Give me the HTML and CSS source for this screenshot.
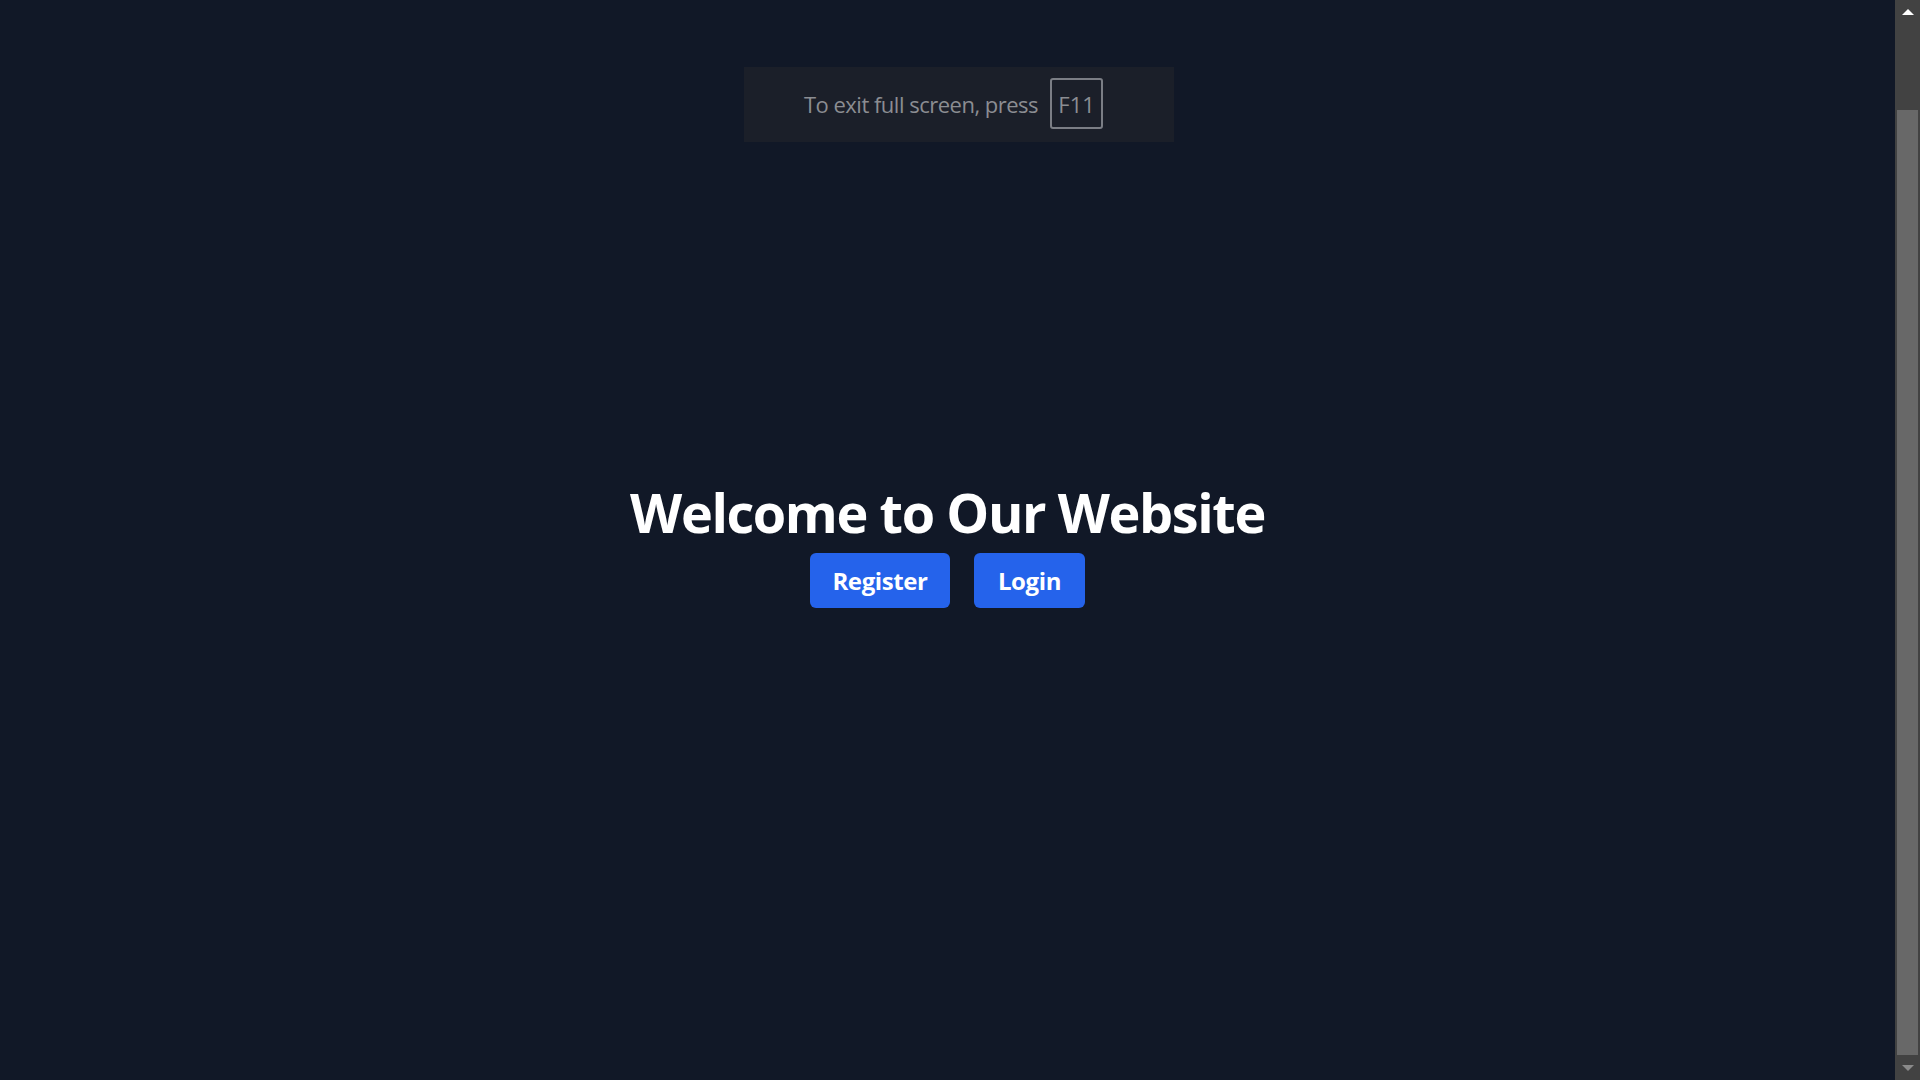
FILE: index.html
```html
<!DOCTYPE html>
<html lang="en">
<head>
<meta charset="utf-8">
<title>Welcome</title>
<link rel="stylesheet" href="styles.css">
</head>
<body>
<div class="screen">
  <main class="main">
    <section class="hero">
      <h1 class="title">Welcome to Our Website</h1>
      <div class="actions">
        <a class="btn btn-register" href="#">Register</a>
        <a class="btn btn-login" href="#">Login</a>
      </div>
    </section>
  </main>
  <div class="scrollbar">
    <div class="sb-arrow sb-up"></div>
    <div class="sb-track"><div class="sb-thumb"></div></div>
    <div class="sb-arrow sb-down"></div>
  </div>
  <div class="fs-toast">
    <span class="fs-text">To exit full screen, press</span>
    <span class="fs-key">F11</span>
  </div>
</div>
</body>
</html>
```

FILE: styles.css
```css
* { box-sizing: border-box; }
html, body { margin: 0; padding: 0; height: 100%; }
body {
  background: #111827;
  font-family: "Open Sans", "Noto Sans", sans-serif;
  overflow: hidden;
}
.screen {
  position: relative;
  display: flex;
  width: 1920px;
  height: 1080px;
}
.main {
  flex: 1;
  display: flex;
  align-items: center;
  justify-content: center;
  padding-top: 8px;
}
.hero {
  display: flex;
  flex-direction: column;
  align-items: center;
}
.title {
  margin: 0;
  color: #ffffff;
  font-weight: 700;
  font-size: 54px;
  line-height: 64px;
  letter-spacing: -1.4px;
}
.actions {
  display: flex;
  gap: 24px;
  margin-top: 9px;
}
.btn {
  display: flex;
  align-items: center;
  justify-content: center;
  height: 55px;
  background: #2563eb;
  color: #ffffff;
  border-radius: 6px;
  font-weight: 700;
  font-size: 24px;
  letter-spacing: -0.4px;
  text-decoration: none;
}
.btn-register { width: 140px; }
.btn-login { width: 111px; }
.scrollbar {
  width: 25px;
  background: #424242;
  display: flex;
  flex-direction: column;
  padding-left: 2px;
  padding-right: 2px;
}
.sb-arrow {
  height: 25px;
  display: flex;
  align-items: center;
  justify-content: center;
}
.sb-up::before {
  content: "";
  border-left: 6px solid transparent;
  border-right: 6px solid transparent;
  border-bottom: 6px solid #ffffff;
  margin-top: -2px;
}
.sb-down::before {
  content: "";
  border-left: 6px solid transparent;
  border-right: 6px solid transparent;
  border-top: 6px solid #8a8a8a;
}
.sb-track {
  flex: 1;
  display: flex;
  flex-direction: column;
  justify-content: flex-end;
}
.sb-thumb {
  height: 945px;
  background: #686868;
}
.fs-toast {
  position: absolute;
  left: 744px;
  top: 67px;
  width: 430px;
  height: 75px;
  background: #1b1f29;
  display: flex;
  align-items: center;
  justify-content: center;
  gap: 12px;
  padding-right: 11px;
  padding-bottom: 2px;
}
.fs-text {
  color: #8b8d92;
  font-size: 22px;
  letter-spacing: -0.5px;
}
.fs-key {
  color: #8b8d92;
  font-size: 22px;
  border: 2px solid #7b7e85;
  border-radius: 3px;
  width: 53px;
  height: 51px;
  display: flex;
  align-items: center;
  justify-content: center;
}
```
